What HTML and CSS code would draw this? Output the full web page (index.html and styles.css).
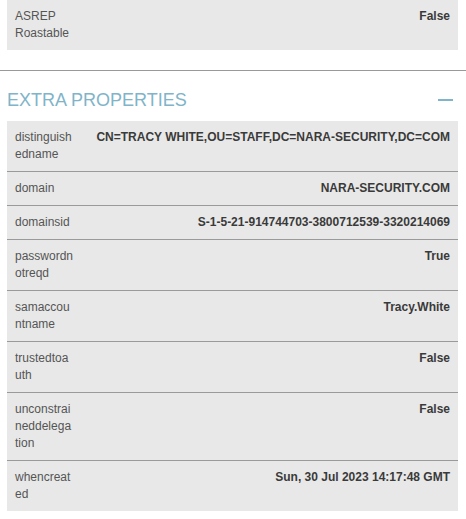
FILE: index.html
```html
<!DOCTYPE html>
<html>
<head>
<meta charset="utf-8">
<link rel="stylesheet" href="styles.css">
</head>
<body>
<div class="box top-box">
  <div class="row">
    <div class="key">ASREP Roastable</div>
    <div class="val">False</div>
  </div>
</div>
<section class="section">
  <div class="section-head">
    <span class="title">EXTRA PROPERTIES</span>
    <span class="minus"></span>
  </div>
  <div class="box">
    <div class="row"><div class="key brk">distinguishedname</div><div class="val">CN=TRACY WHITE,OU=STAFF,DC=NARA-SECURITY,DC=COM</div></div>
    <div class="row"><div class="key brk">domain</div><div class="val">NARA-SECURITY.COM</div></div>
    <div class="row"><div class="key brk">domainsid</div><div class="val">S-1-5-21-914744703-3800712539-3320214069</div></div>
    <div class="row"><div class="key brk">passwordnotreqd</div><div class="val">True</div></div>
    <div class="row"><div class="key brk">samaccountname</div><div class="val">Tracy.White</div></div>
    <div class="row"><div class="key brk">trustedtoauth</div><div class="val">False</div></div>
    <div class="row"><div class="key brk">unconstraineddelegation</div><div class="val">False</div></div>
    <div class="row"><div class="key brk">whencreated</div><div class="val">Sun, 30 Jul 2023 14:17:48 GMT</div></div>
  </div>
</section>
</body>
</html>
```
FILE: styles.css
```css
html, body {
  margin: 0;
  padding: 0;
  background: #ffffff;
}
body {
  font-family: "Liberation Sans", Arial, sans-serif;
  font-size: 12px;
  line-height: 17px;
  color: #555;
}
.box {
  background: #e8e8e8;
  margin: 0 8px 0 7px;
}
.top-box {
  margin-bottom: 20px;
}
.row {
  display: grid;
  grid-template-columns: 59px 1fr;
  column-gap: 8px;
  padding: 8px 8px;
  border-top: 1px solid #9a9a9a;
}
.box .row:first-child {
  border-top: none;
}
.key {
  color: #555;
}
.brk {
  word-break: break-all;
}
.val {
  text-align: right;
  font-weight: bold;
  color: #3a3a3a;
}
.section {
  border-top: 1px solid #999;
}
.section-head {
  display: flex;
  align-items: center;
  justify-content: space-between;
  padding: 17px 5px 9px 7px;
  height: 24px;
}
.title {
  font-family: "Liberation Sans", Arial, sans-serif;
  font-size: 18px;
  color: #7fb4c9;
  line-height: 24px;
}
.minus {
  display: block;
  width: 15px;
  height: 2px;
  background: #7fb4c9;
  margin-right: 8px;
}
```
